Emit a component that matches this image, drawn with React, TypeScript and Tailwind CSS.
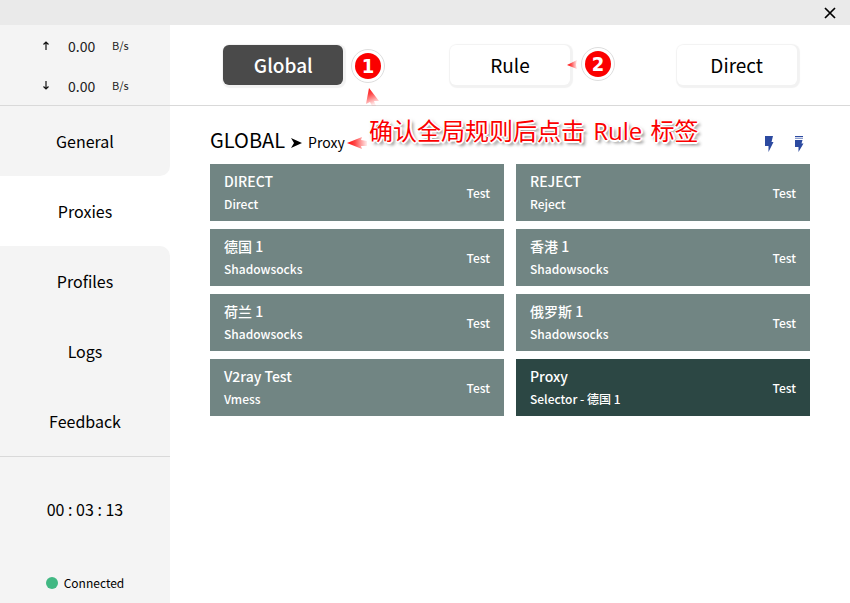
import { useState } from 'react';

const modes = ['Global', 'Rule', 'Direct'];
const pages = ['General', 'Proxies', 'Profiles', 'Logs', 'Feedback'];
const proxies = [
  { name: 'DIRECT', type: 'Direct' },
  { name: 'REJECT', type: 'Reject' },
  { name: '德国 1', type: 'Shadowsocks' },
  { name: '香港 1', type: 'Shadowsocks' },
  { name: '荷兰 1', type: 'Shadowsocks' },
  { name: '俄罗斯 1', type: 'Shadowsocks' },
  { name: 'V2ray Test', type: 'Vmess' },
  { name: 'Proxy', type: 'Selector - 德国 1' },
];

function TitleBar() {
  return (
    <div className="flex h-[25px] shrink-0 items-center justify-end bg-[#eaeaea] pr-3.5">
      <button type="button" aria-label="Close">
        <svg width="12" height="12" viewBox="0 0 12 12" className="block">
          <path d="M1 1 11 11M11 1 1 11" stroke="#000" strokeWidth="1.7" fill="none" />
        </svg>
      </button>
    </div>
  );
}

function Speed({ direction }: { direction: 'up' | 'down' }) {
  return (
    <div className="flex h-10 items-center pt-px pl-[42px] text-[#222]">
      <span className="w-[26px]">
        <svg width="8" height="9" viewBox="0 0 8 9" className={direction === 'down' ? 'block rotate-180' : 'block'}>
          <path d="M4 9V1M1.500 3.500 4 1l2.500 2.500" stroke="#111" strokeWidth="1.2" fill="none" />
        </svg>
      </span>
      <span className="w-11 text-sm">0.00</span>
      <span className="text-[11px]">B/s</span>
    </div>
  );
}

function Sidebar() {
  const [page, setPage] = useState('Proxies');
  const active = pages.indexOf(page);
  return (
    <aside className="flex w-[170px] shrink-0 flex-col">
      <div className="h-[81px] border-b border-[#d9d9d9] bg-[#f4f4f4]">
        <Speed direction="up" />
        <Speed direction="down" />
      </div>
      <nav className="flex flex-col">
        {pages.map((p, i) => (
          <button
            key={p}
            type="button"
            onClick={() => setPage(p)}
            className={`h-[70px] text-base ${i === active ? 'bg-white' : 'bg-[#f4f4f4]'} ${
              i === active - 1 ? 'rounded-br-[10px]' : ''
            } ${i === active + 1 ? 'rounded-tr-[10px]' : ''}`}
          >
            {p}
          </button>
        ))}
      </nav>
      <div className="flex grow flex-col items-center justify-between border-t border-[#d9d9d9] bg-[#f4f4f4] pt-10 pb-2.5">
        <time className="text-base">00 : 03 : 13</time>
        <div className="flex items-center gap-1.5 text-xs leading-5">
          <span className="size-3 rounded-full bg-[#41b883]" />
          Connected
        </div>
      </div>
    </aside>
  );
}

function Callout({ n }: { n: number }) {
  return (
    <span className="flex size-[34px] items-center justify-center rounded-full border border-[#dedede] bg-white">
      <span className="flex size-[26px] items-center justify-center rounded-full bg-[#fb0000] font-['DejaVu_Sans_Condensed','DejaVu_Sans',sans-serif] text-xl leading-none font-bold text-white">
        {n}
      </span>
    </span>
  );
}

function Pointer({ width, height, points, x2, y2, id }: { width: number; height: number; points: string; x2: number; y2: number; id: string }) {
  return (
    <svg width={width} height={height} className="block">
      <defs>
        <linearGradient id={id} x1="0" y1="0" x2={x2} y2={y2}>
          <stop offset="0" stopColor="#ff0808" />
          <stop offset="0.4" stopColor="#ff4848" />
          <stop offset="1" stopColor="#ff4848" stopOpacity="0.1" />
        </linearGradient>
      </defs>
      <polygon points={points} fill={`url(#${id})`} />
    </svg>
  );
}

function Bolt({ barred }: { barred?: boolean }) {
  return (
    <svg width="10" height="18" viewBox="0 0 10 18" className="block">
      {barred ? (
        <>
          <path d="M1 1h8v1.2H1z" fill="#2c4aa0" />
          <path d="M1 3h8v1H1z" fill="#8fa0d0" />
          <path d="M1 5h7.500L7.500 8.500H9.500L4.500 17V12H1z" fill="#2c4aa0" />
        </>
      ) : (
        <path d="M1 1h8L7.500 7H9.500L4.500 17V11H1z" fill="#2c4aa0" />
      )}
    </svg>
  );
}

export default function App() {
  const [mode, setMode] = useState('Global');
  const [selected, setSelected] = useState('Proxy');
  return (
    <div className="relative flex min-h-screen flex-col bg-white font-['Noto_Sans_CJK_SC',sans-serif] text-black">
      <TitleBar />
      <div className="flex grow">
        <Sidebar />
        <main className="min-w-0 grow">
          <div className="grid h-[81px] grid-cols-3 items-center justify-items-center border-b border-[#d9d9d9]">
            {modes.map((m) => (
              <button
                key={m}
                type="button"
                onClick={() => setMode(m)}
                className={`h-10 w-[120px] rounded-md text-[19px] shadow-[1px_1px_1px_2px_#f2f2f2] ${
                  m === mode ? 'bg-[#4a4a4a] font-medium text-white' : 'bg-white'
                }`}
              >
                {m}
              </button>
            ))}
          </div>
          <section className="px-10">
            <header className="flex h-[58px] items-center justify-between pt-2.5">
              <h1 className="flex items-baseline gap-1.5">
                <span className="text-xl">GLOBAL</span>
                <svg width="11" height="10" viewBox="0 0 11 10">
                  <path d="M0 0 11 5 0 10 3 5z" fill="#000" />
                </svg>
                <span className="text-sm">Proxy</span>
              </h1>
              <div className="flex gap-5 pt-2 pr-1.5">
                <button type="button" aria-label="Test all">
                  <Bolt />
                </button>
                <button type="button" aria-label="Test group">
                  <Bolt barred />
                </button>
              </div>
            </header>
            <ul className="grid grid-cols-2 gap-x-3 gap-y-2">
              {proxies.map(({ name, type }) => (
                <li
                  key={name}
                  className={`flex h-[57px] font-medium text-white ${name === selected ? 'bg-[#2c4744]' : 'bg-[#718583]'}`}
                >
                  <button type="button" onClick={() => setSelected(name)} className="grow pb-px pl-3.5 text-left">
                    <span className="block text-sm leading-6">{name}</span>
                    <span className="block text-xs leading-[22px]">{type}</span>
                  </button>
                  <button type="button" className="px-3.5 text-xs">
                    Test
                  </button>
                </li>
              ))}
            </ul>
          </section>
        </main>
      </div>
      <div className="absolute top-[49px] left-[351px]">
        <Callout n={1} />
      </div>
      <div className="absolute top-[47px] left-[581px]">
        <Callout n={2} />
      </div>
      <div className="absolute top-[88px] left-[366px]">
        <Pointer id="up" width={14} height={18} points="3,0 13,13 8,13 10,18 6,18 4,14 0,16" x2={0.3} y2={1} />
      </div>
      <div className="absolute top-[60px] left-[567px]">
        <Pointer id="left" width={11} height={9} points="0,5 10,0 9,5 10,9" x2={1} y2={0} />
      </div>
      <div className="absolute top-[137px] left-[347px]">
        <Pointer id="wide" width={20} height={13} points="0,6 15,0 14,3 20,4 20,9 14,9 15,12" x2={1} y2={0} />
      </div>
      <p className="absolute top-[113px] left-[369px] font-['Open_Sans','Noto_Sans_CJK_SC',sans-serif] text-2xl leading-9 whitespace-nowrap text-[#fb0000] [text-shadow:1px_0_#fff,-1px_0_#fff,0_1px_#fff,0_-1px_#fff,1px_1px_#fff,-1px_1px_#fff,2px_0_#fff,0_2px_#fff,3px_3px_3px_#888,2px_2px_4px_#aaa]">
        确认全局规则后点击 <span className="mx-0.5">Rule</span> 标签
      </p>
    </div>
  );
}
